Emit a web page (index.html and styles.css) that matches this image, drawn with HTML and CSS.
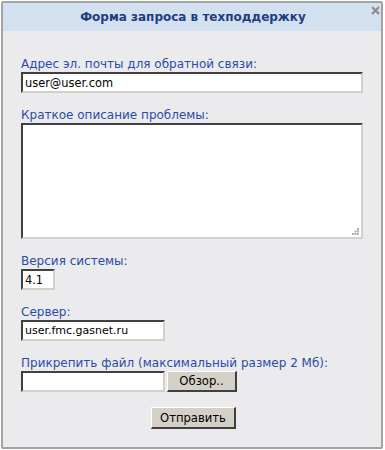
FILE: index.html
```html
<!DOCTYPE html>
<html lang="ru">
<head>
<meta charset="utf-8">
<link rel="stylesheet" href="styles.css">
</head>
<body>
<div class="dialog">
  <div class="header">
    <span class="title">Форма запроса в техподдержку</span>
    <svg class="close" width="9" height="9" viewBox="0 0 9 9"><path d="M1 1L8 8M8 1L1 8" stroke="#8c8c8c" stroke-width="2.2"/></svg>
  </div>
  <form class="body">
    <div class="field">
      <label class="label">Адрес эл. почты для обратной связи:</label>
      <input class="input email" type="text" value="user@user.com">
    </div>
    <div class="field">
      <label class="label">Краткое описание проблемы:</label>
      <div class="areawrap">
        <textarea class="input area"></textarea>
        <svg class="grip" width="7" height="7" viewBox="0 0 7 7">
          <rect x="5" y="0" width="2" height="2" fill="#b0b0b0"/>
          <rect x="2.5" y="2.5" width="2" height="2" fill="#b0b0b0"/>
          <rect x="5" y="2.5" width="2" height="2" fill="#b0b0b0"/>
          <rect x="0" y="5" width="2" height="2" fill="#b0b0b0"/>
          <rect x="2.5" y="5" width="2" height="2" fill="#b0b0b0"/>
          <rect x="5" y="5" width="2" height="2" fill="#b0b0b0"/>
        </svg>
      </div>
    </div>
    <div class="field">
      <label class="label">Версия системы:</label>
      <input class="input version" type="text" value="4.1">
    </div>
    <div class="field">
      <label class="label">Сервер:</label>
      <input class="input server" type="text" value="user.fmc.gasnet.ru">
    </div>
    <div class="field">
      <label class="label">Прикрепить файл (максимальный размер 2 Мб):</label>
      <div class="filerow">
        <input class="input file" type="text" value="">
        <button type="button" class="btn browse">Обзор..</button>
      </div>
    </div>
    <div class="actions">
      <button type="button" class="btn submit">Отправить</button>
    </div>
  </form>
</div>
</body>
</html>
```
FILE: styles.css
```css
html, body {
  margin: 0;
  padding: 0;
  background: #ffffff;
}
body {
  padding: 1px 2px 2px 1px;
  font-family: "DejaVu Sans", Verdana, sans-serif;
}
.dialog {
  width: 378px;
  height: 444px;
  border: 2px solid #a4a4a4;
  border-radius: 2px;
  background: #ebebed;
  display: flex;
  flex-direction: column;
}
.header {
  height: 28px;
  background: #d3e0f0;
  display: flex;
  align-items: center;
  justify-content: center;
  position: relative;
}
.title {
  font-weight: bold;
  font-size: 12px;
  color: #1f3d7f;
  margin-left: 2px;
}
.close {
  position: absolute;
  right: 1px;
  top: 3px;
}
.body {
  margin: 0;
  padding: 26px 0 0 18px;
  display: flex;
  flex-direction: column;
}
.field {
  display: flex;
  flex-direction: column;
  align-items: flex-start;
  margin-bottom: 15px;
}
.label {
  font-size: 12px;
  color: #2b4ba8;
  line-height: 14px;
  margin-bottom: 1px;
}
.input {
  box-sizing: border-box;
  margin: 0;
  border-style: solid;
  border-width: 2px;
  border-color: #404040 #d4d0c8 #d4d0c8 #404040;
  background: #ffffff;
  font-family: "DejaVu Sans", Verdana, sans-serif;
  font-size: 11px;
  color: #000;
  padding: 1px 2px;
  outline: none;
}
.email {
  width: 342px;
  height: 21px;
  font-size: 11.4px;
}
.areawrap {
  position: relative;
  width: 342px;
  height: 116px;
}
.area {
  width: 342px;
  height: 116px;
  resize: none;
  display: block;
}
.grip {
  position: absolute;
  right: 4px;
  bottom: 4px;
}
.version {
  width: 34px;
  height: 21px;
  font-size: 11.4px;
}
.server {
  width: 144px;
  height: 21px;
}
.filerow {
  display: flex;
  gap: 2px;
}
.file {
  width: 144px;
  height: 21px;
}
.btn {
  margin: 0;
  box-sizing: border-box;
  height: 21px;
  background: #d4d0c8;
  border-style: solid;
  border-width: 1px 2px 2px 1px;
  border-color: #ffffff #404040 #404040 #ffffff;
  font-family: "DejaVu Sans", Verdana, sans-serif;
  font-size: 11.6px;
  color: #000;
  padding: 0 4px;
}
.browse {
  width: 70px;
}
.actions {
  display: flex;
  padding-left: 130px;
}
.submit {
  width: 85px;
  height: 22px;
}
```
